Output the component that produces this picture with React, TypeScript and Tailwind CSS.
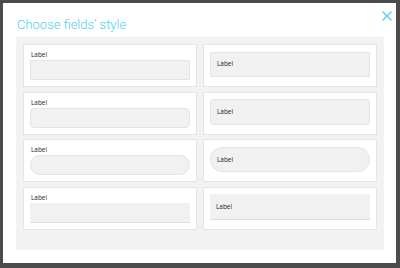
import React from "react";

const leftInputs = [
  "border border-[#e2e3e2] rounded-[1px]",
  "border border-[#e2e3e2] rounded-[4px]",
  "border border-[#e2e3e2] rounded-[10px]",
  "border-b border-[#dcdddc]",
];

const rightInputs = [
  "border border-[#e2e3e2] rounded-[1px]",
  "border border-[#e2e3e2] rounded-[4px]",
  "border border-[#e2e3e2] rounded-[12px]",
  "border-b border-[#dcdddc]",
];

export default function App() {
  return (
    <div
      className="w-[400px] h-[268px] bg-[#4b4b4b] pt-[3px] pl-[3px] overflow-hidden"
      style={{ fontFamily: "'Open Sans', Roboto, sans-serif" }}
    >
      <div className="w-[393px] h-[260px] bg-white flex flex-col px-[13px] pb-[13px] pr-[12px]">
        <div className="h-[34px] flex items-start justify-between">
          <div
            className="mt-[14px] ml-[1px] text-[13px] leading-[16px] font-light text-[#4ccfee]"
            style={{ fontFamily: "Roboto, sans-serif" }}
          >
            Choose fields’ style
          </div>
          <svg
            className="mt-[7.5px] mr-[-8px]"
            width="10"
            height="10"
            viewBox="0 0 10 10"
          >
            <path d="M0.5 0.5 L9.5 9.5 M9.5 0.5 L0.5 9.5" stroke="#4ccfee" strokeWidth="1.3" fill="none" />
          </svg>
        </div>
        <div className="flex-1 bg-[#f2f2f2] p-[7px]">
          <div className="grid grid-cols-2 gap-x-[6px] gap-y-[4.67px] grid-rows-[repeat(4,43px)]">
            {[0, 1, 2, 3].map((i) => (
              <React.Fragment key={i}>
                <div className="bg-white border border-[#e6e6e6] px-[6px] flex flex-col justify-end pb-[6px]">
                  <div className="text-[6.4px] leading-[8px] text-[#222] mb-[1px] pl-[1px]">Label</div>
                  <div className={"h-[20px] bg-[#f0f1f0] " + leftInputs[i]} />
                </div>
                <div className="bg-white border border-[#e6e6e6] px-[6px] pt-[6.5px]">
                  <div
                    className={
                      "h-[25.5px] bg-[#f0f1f0] flex items-center pl-[6px] text-[6.4px] text-[#222] " +
                      rightInputs[i]
                    }
                  >
                    Label
                  </div>
                </div>
              </React.Fragment>
            ))}
          </div>
        </div>
      </div>
    </div>
  );
}
